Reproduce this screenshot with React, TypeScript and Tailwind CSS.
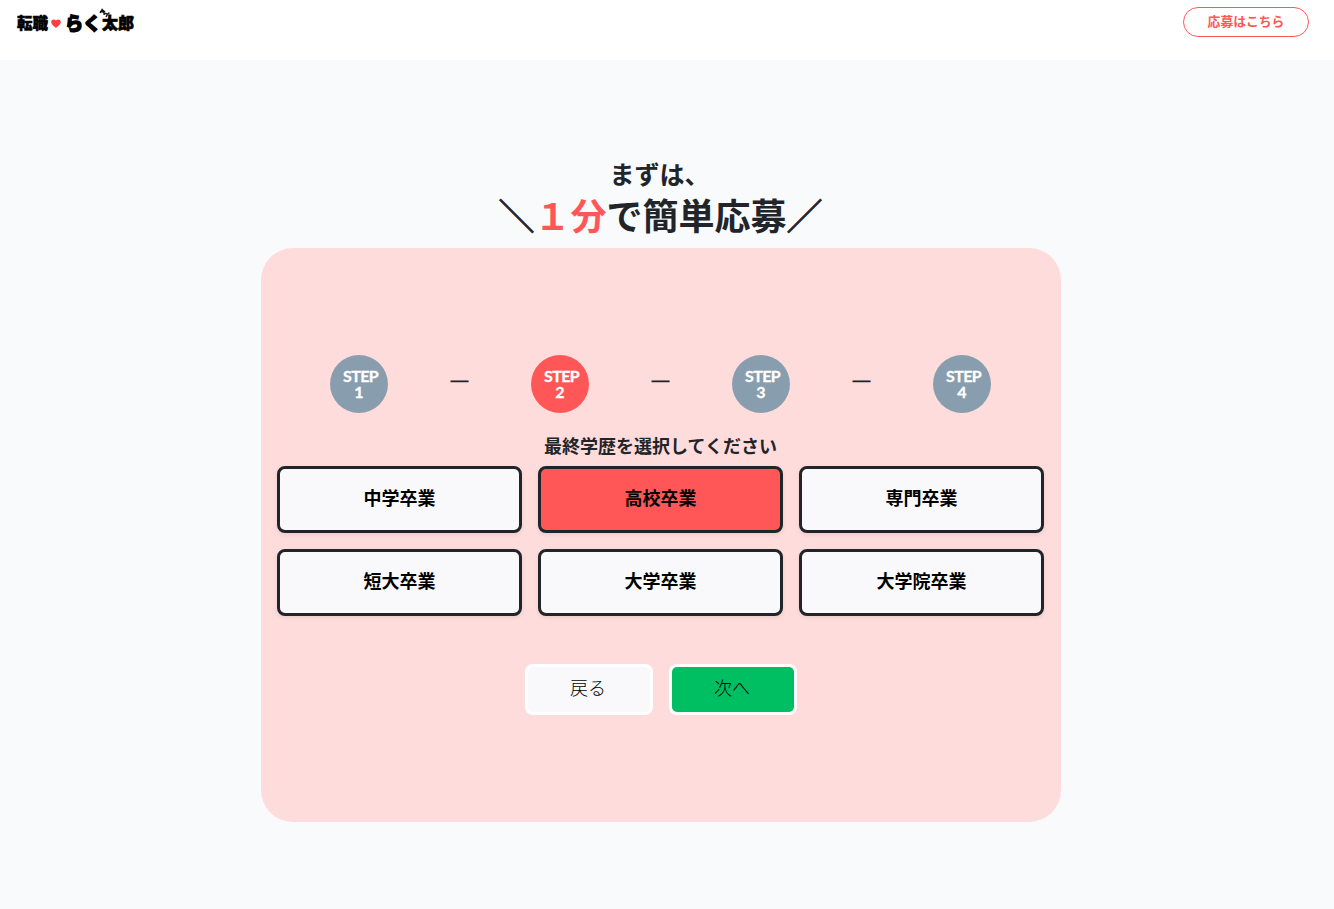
import { Fragment } from "react";

const jp = "font-['Noto_Sans_CJK_JP','Noto_Sans',sans-serif]";

const steps = [1, 2, 3, 4];
const options = ["中学卒業", "高校卒業", "専門卒業", "短大卒業", "大学卒業", "大学院卒業"];

function Logo() {
  return (
    <div className="relative flex h-[18px] items-center font-black leading-[18px] text-black">
      <span className="w-[32px] whitespace-nowrap text-[15.5px] [-webkit-text-stroke:0.5px_black]">転職</span>
      <svg className="mt-[3px] mr-[4px] ml-[2px] h-[9px] w-[10px]" viewBox="0 0 10 9">
        <path
          d="M5 8.8C3.8 7.8.2 5.4.2 2.9.2.2 3.8-.3 5 1.5 6.2-.3 9.8.2 9.8 2.9 9.8 5.4 6.2 7.8 5 8.8Z"
          fill="#f8403c"
        />
      </svg>
      <span className="w-[37px] whitespace-nowrap text-[18px] leading-[17px] [-webkit-text-stroke:1.4px_black]">らく</span>
      <span className="w-[34px] whitespace-nowrap text-[16px] [-webkit-text-stroke:0.6px_black]">太郎</span>
      <svg className="absolute top-[-5px] left-[82px] h-[12px] w-[13px]" viewBox="0 0 13 12">
        <path
          d="M3.4 3.2 5.2 5 8.5 6.2 10.4 4.6M5 4.6 5.2 7M8.6 6.2 7 9"
          fill="none"
          stroke="#222"
          strokeWidth="1.5"
        />
        <path d="M.4 4.2 2.2 1.8 3 .2l1 1.4 2.6 1.8L4.8 4.6 3 4.2 1.2 5.2Z" fill="#111" />
      </svg>
    </div>
  );
}

export default function App() {
  return (
    <div className={`flex h-[909px] w-full flex-col overflow-hidden bg-[#f9fafc] text-[#212529] ${jp}`}>
      <header className="flex h-[60px] shrink-0 items-start justify-between bg-white pr-[25px] pl-[17px]">
        <div className="pt-[13px]">
          <Logo />
        </div>
        <a className="mt-[7px] flex h-[30px] w-[126px] items-center justify-center rounded-full border border-[#ff5757] pb-[3px] text-[12.8px] font-bold text-[#ff5757]">
          応募はこちら
        </a>
      </header>

      <main className="flex w-[1321px] flex-col items-center pt-[93px]">
        <h2 className="h-[39px] pr-[2px] text-[25px] leading-[40px] font-bold">まずは、</h2>
        <h1 className="h-[56px] text-[36px] leading-[44px] font-bold whitespace-nowrap">
          <span className="[-webkit-text-stroke:0.7px_#212529]">＼</span>
          <span className="text-[#ff5757]">１分</span>で簡単応募
          <span className="[-webkit-text-stroke:0.7px_#212529]">／</span>
        </h1>

        <section className="ml-px flex h-[574px] w-[800px] flex-col rounded-[32px] bg-[#ffdcdc] px-[16px] pt-[107px]">
          <div className="flex items-center pl-[53px]">
            {steps.map((n) => (
              <Fragment key={n}>
                {n > 1 && (
                  <span className="h-[34px] w-[143px] text-center text-[20px] leading-[28px] font-bold [-webkit-text-stroke:0.9px_#212529]">
                    ―
                  </span>
                )}
                <div
                  className={`flex h-[58px] w-[58px] flex-col items-center justify-center rounded-full text-center font-['Lato',sans-serif] text-[16px] leading-[16px] font-bold text-white ${
                    n === 2 ? "bg-[#ff5757]" : "bg-[#889eae]"
                  }`}
                >
                  <span className="pl-[3px] tracking-[-0.6px] [-webkit-text-stroke:0.3px_white]">STEP</span>
                  <span className="[-webkit-text-stroke:0.3px_white]">{n}</span>
                </div>
              </Fragment>
            ))}
          </div>

          <p className="mt-[19px] h-[34px] pr-px text-center text-[18px] leading-[27px] font-bold">
            最終学歴を選択してください
          </p>

          <div className="grid w-[767px] grid-cols-3 gap-[16px]">
            {options.map((label, i) => (
              <button
                key={label}
                className={`h-[67px] rounded-[8px] border-3 border-[#212529] pb-[5px] text-[18px] font-bold text-black shadow-[0_2px_4px_rgba(0,0,0,0.075)] ${
                  i === 1 ? "bg-[#ff5757]" : "bg-[#f9f9fb]"
                }`}
              >
                {label}
              </button>
            ))}
          </div>

          <div className="mt-[48px] flex justify-center gap-[16px]">
            <button className="h-[51px] w-[128px] rounded-[8px] border-3 border-white bg-[#f9f9fb] pr-[2px] pb-[5px] text-[18px] font-light text-black">
              戻る
            </button>
            <button className="h-[51px] w-[128px] rounded-[8px] border-3 border-white bg-[#00bf63] pr-[2px] pb-[5px] text-[18px] font-light text-black">
              次へ
            </button>
          </div>
        </section>
      </main>
    </div>
  );
}
